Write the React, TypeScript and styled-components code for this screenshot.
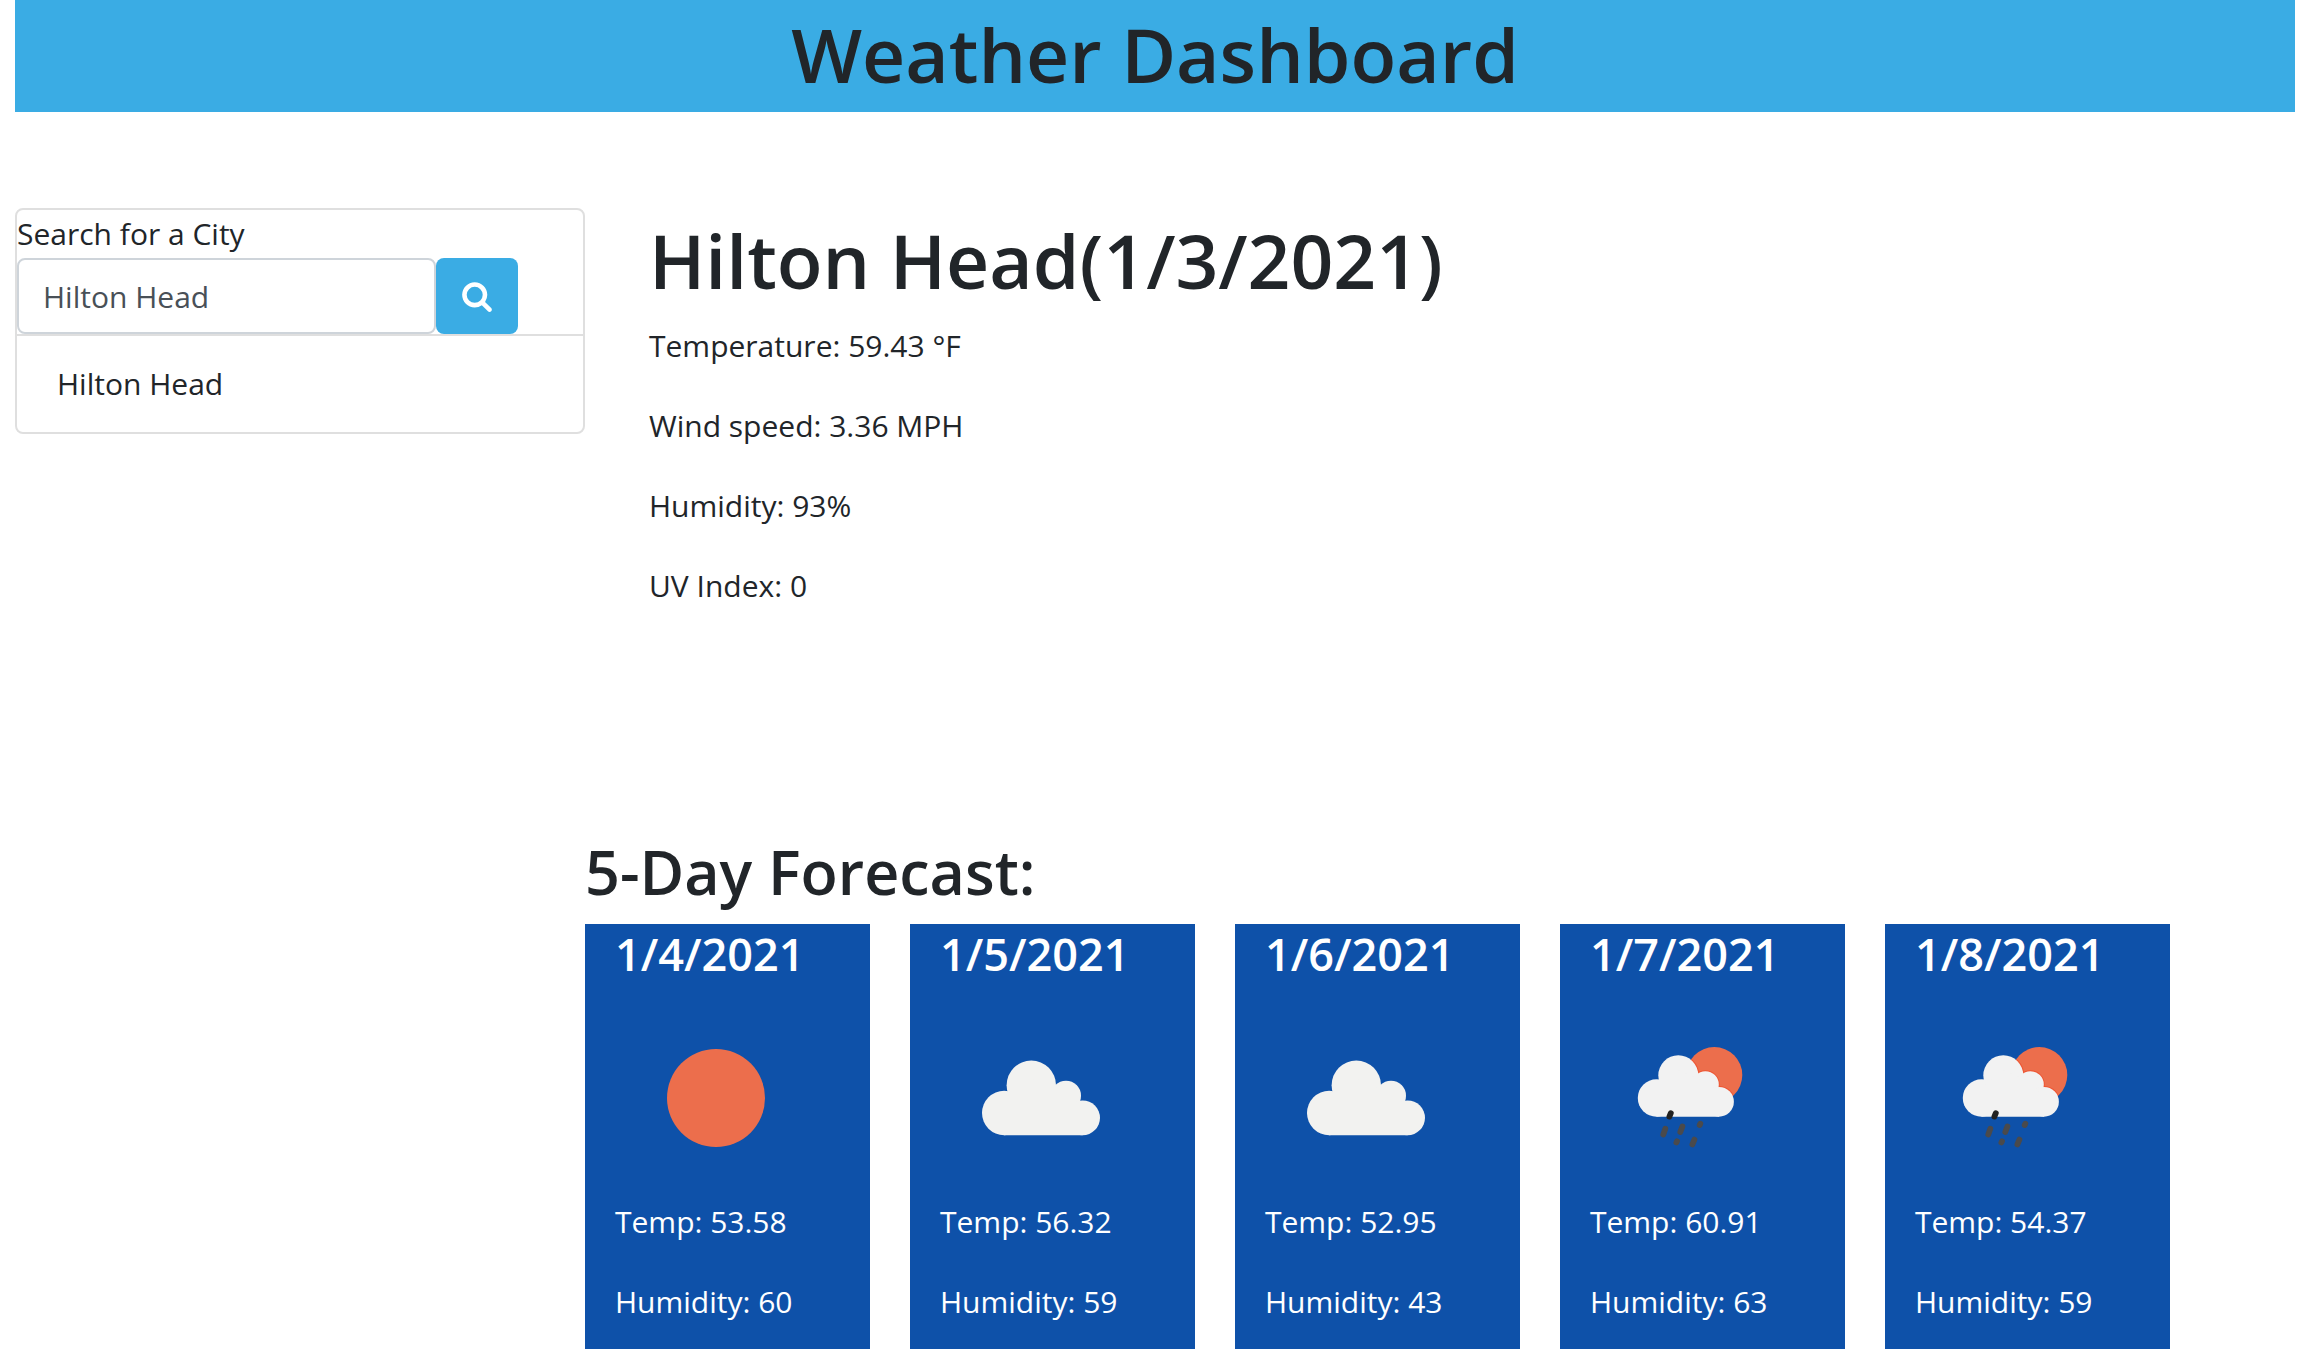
import React from "react";
import styled, { createGlobalStyle } from "styled-components";

const GlobalStyle = createGlobalStyle`
  *, *::before, *::after { box-sizing: border-box; }
  body {
    margin: 0;
    background: #fff;
    color: #212529;
    font-family: "Open Sans", "Noto Sans", sans-serif;
    font-size: 30px;
    line-height: 48px;
  }
`;

const Page = styled.div`
  padding: 0 11px 0 15px;
`;

const Header = styled.header`
  background: #3aace4;
  padding: 4px 0 8px;
  margin-bottom: 96px;
  text-align: center;
`;

const Title = styled.h1`
  margin: 0;
  font-size: 75px;
  font-weight: 600;
  line-height: 100px;
`;

const Columns = styled.div`
  display: grid;
  grid-template-columns: 1fr 3fr;
  align-items: start;
`;

const SearchCard = styled.aside`
  border: 2px solid #dfdfdf;
  border-radius: 8px;
`;

const SearchForm = styled.form`
  display: grid;
  grid-template-columns: 74% auto;
  justify-content: start;
  border-bottom: 2px solid #dfdfdf;
`;

const SearchLabel = styled.label`
  grid-column: 1 / -1;
`;

const SearchInput = styled.input`
  min-width: 0;
  height: 76px;
  padding: 12px 24px;
  border: 2px solid #ced4da;
  border-radius: 8px;
  background: #fff;
  color: #495057;
  font: inherit;
`;

const SearchButton = styled.button`
  display: flex;
  align-items: center;
  justify-content: center;
  width: 82px;
  height: 76px;
  padding: 0;
  border: 0;
  border-radius: 8px;
  background: #3aace4;
  color: #fff;
  cursor: pointer;
`;

const History = styled.ul`
  margin: 0;
  padding: 0;
  list-style: none;
`;

const HistoryItem = styled.li`
  padding: 24px 40px;
`;

const Current = styled.section`
  padding: 2px 64px 0;
  min-height: 623px;
`;

const Stat = styled.p`
  margin: 0 0 32px;
`;

const CityName = styled(Title).attrs({ as: "h2" })`
  margin-bottom: 12px;
`;

const ForecastTitle = styled.h2`
  margin: 0 0 12px;
  font-size: 61px;
  font-weight: 600;
  line-height: 81px;
`;

const ForecastRow = styled.div`
  display: flex;
  gap: 40px;
`;

const DayCard = styled.article`
  flex: 0 0 calc(100% / 6);
  padding: 0 30px 23px;
  background: #0e51a9;
  color: #fff;

  ${Stat}:last-child {
    margin-bottom: 0;
  }
`;

const DayDate = styled.h3`
  margin: 0 0 14px;
  font-size: 45px;
  font-weight: 600;
  line-height: 60px;
`;

const WeatherSvg = styled.svg`
  display: block;
  width: 200px;
  height: 200px;
`;

type Sky = "sun" | "cloud" | "rain";

const RainCloud = ({ fill, stroke }: { fill: string; stroke?: string }) => (
  <g fill={fill} stroke={stroke} strokeWidth={stroke ? 2 : 0}>
    <circle cx="66.5" cy="100" r="18.7" />
    <circle cx="88.3" cy="77.3" r="20" />
    <circle cx="115.4" cy="86.6" r="13.4" />
    <circle cx="129" cy="103.8" r="14.9" />
    <path d="M66.5 118.7V90L88 72L116 84L129 100V118.7Z" />
  </g>
);

const WeatherIcon = ({ sky, id }: { sky: Sky; id: string }) => (
  <WeatherSvg viewBox="0 0 200 200" aria-hidden="true">
    {sky === "sun" && <circle cx="101" cy="100" r="49" fill="#ec6e4c" />}
    {sky === "cloud" && (
      <g fill="#f2f2f0">
        <circle cx="64.2" cy="115" r="22.2" />
        <circle cx="91.3" cy="87.3" r="24.7" />
        <circle cx="126" cy="97.7" r="15" />
        <circle cx="142.6" cy="119.8" r="17.4" />
        <path d="M64 137.2V100L91 80L126 97L142.6 110V137.2Z" />
      </g>
    )}
    {sky === "rain" && (
      <>
        <clipPath id={id}>
          <circle cx="124.3" cy="77" r="28" />
        </clipPath>
        <circle cx="124.3" cy="77" r="28" fill="#ec6e4c" />
        <g clipPath={`url(#${id})`}>
          <RainCloud fill="#ee5532" stroke="#ee5532" />
        </g>
        <RainCloud fill="#f2f2f2" />
        <g stroke="#4a4a4c" strokeWidth="5.8" strokeLinecap="round">
          <path d="M75.3 130.8L73.3 136.4" />
          <path d="M92.4 128.5L90.3 134.1" />
          <path d="M110.3 125.7L109.7 127" />
          <path d="M87 143.3L86.4 144.5" />
          <path d="M104.4 141.6L102.4 146.4" />
          <path d="M80.8 115.2L79.4 118.6" stroke="#222" />
        </g>
      </>
    )}
  </WeatherSvg>
);

const SearchIcon = () => (
  <svg width="32" height="32" viewBox="0 0 1792 1792" fill="currentColor" aria-hidden="true">
    <path d="M1216 832q0-185-131.5-316.5t-316.5-131.5-316.5 131.5-131.5 316.5 131.5 316.5 316.5 131.5 316.5-131.5 131.5-316.5zm512 832q0 52-38 90t-90 38q-54 0-90-38l-343-342q-179 124-399 124-143 0-273.5-55.5t-225-150-150-225-55.5-273.5 55.5-273.5 150-225 225-150 273.5-55.5 273.5 55.5 225 150 150 225 55.5 273.5q0 220-124 399l343 343q37 37 37 90z" />
  </svg>
);

const days: { date: string; sky: Sky; temp: string; humidity: number }[] = [
  { date: "1/4/2021", sky: "sun", temp: "53.58", humidity: 60 },
  { date: "1/5/2021", sky: "cloud", temp: "56.32", humidity: 59 },
  { date: "1/6/2021", sky: "cloud", temp: "52.95", humidity: 43 },
  { date: "1/7/2021", sky: "rain", temp: "60.91", humidity: 63 },
  { date: "1/8/2021", sky: "rain", temp: "54.37", humidity: 59 },
];

export default function App() {
  return (
    <Page>
      <GlobalStyle />
      <Header>
        <Title>Weather Dashboard</Title>
      </Header>
      <Columns>
        <SearchCard>
          <SearchForm onSubmit={(event) => event.preventDefault()}>
            <SearchLabel htmlFor="city">Search for a City</SearchLabel>
            <SearchInput id="city" type="text" defaultValue="Hilton Head" />
            <SearchButton type="submit" aria-label="Search">
              <SearchIcon />
            </SearchButton>
          </SearchForm>
          <History>
            <HistoryItem>Hilton Head</HistoryItem>
          </History>
        </SearchCard>
        <main>
          <Current>
            <CityName>Hilton Head(1/3/2021)</CityName>
            <Stat>Temperature: 59.43 °F</Stat>
            <Stat>Wind speed: 3.36 MPH</Stat>
            <Stat>Humidity: 93%</Stat>
            <Stat>UV Index: 0</Stat>
          </Current>
          <section>
            <ForecastTitle>5-Day Forecast:</ForecastTitle>
            <ForecastRow>
              {days.map((day, index) => (
                <DayCard key={day.date}>
                  <DayDate>{day.date}</DayDate>
                  <WeatherIcon sky={day.sky} id={`sun-${index}`} />
                  <Stat>Temp: {day.temp}</Stat>
                  <Stat>Humidity: {day.humidity}</Stat>
                </DayCard>
              ))}
            </ForecastRow>
          </section>
        </main>
      </Columns>
    </Page>
  );
}
